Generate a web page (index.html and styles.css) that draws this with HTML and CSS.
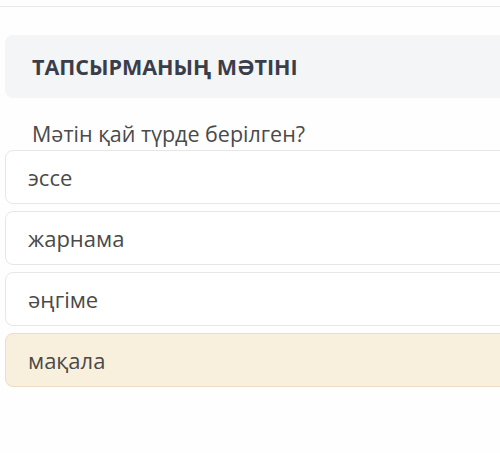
FILE: index.html
```html
<!DOCTYPE html>
<html lang="kk">
<head>
    <meta charset="UTF-8">
    <meta name="viewport" content="width=device-width, initial-scale=1.0">
    <title>Тапсырма</title>
    <link rel="stylesheet" href="styles.css">
</head>
<body>
    <div class="topbar"></div>
    <div class="task">
        <div class="task-header">
            <h2>ТАПСЫРМАНЫҢ МӘТІНІ</h2>
        </div>
        <p class="question">Мәтін қай түрде берілген?</p>
        <div class="options">
            <div class="option">эссе</div>
            <div class="option">жарнама</div>
            <div class="option">әңгіме</div>
            <div class="option selected">мақала</div>
        </div>
    </div>
</body>
</html>
```
FILE: styles.css
```css
body {
    font-family: 'Open Sans', 'Noto Sans', sans-serif;
    margin: 0;
    padding: 0;
    background: #fefefe;
    color: #484848;
    overflow: hidden;
}
.topbar {
    height: 6px;
    border-bottom: 1px solid #e9e9e9;
}
.task {
    padding-left: 5px;
    margin-right: -20px;
}
.task-header {
    margin-top: 28px;
    height: 63px;
    background: #f4f5f7;
    border-radius: 8px;
    display: flex;
    align-items: center;
    padding-left: 27px;
}
.task-header h2 {
    margin: 0;
    font-size: 21.5px;
    font-weight: 700;
    color: #3a3e49;
}
.question {
    margin: 22px 0 2px 27px;
    font-size: 21.5px;
    line-height: 28px;
    color: #4a4a4a;
}
.options {
    display: flex;
    flex-direction: column;
    gap: 7px;
}
.option {
    height: 52px;
    border: 1px solid #e7e7e7;
    border-radius: 8px;
    background: #fff;
    display: flex;
    align-items: center;
    padding-left: 22px;
    font-size: 22px;
    color: #4a4a4a;
}
.option.selected {
    background: #f8efdc;
    border-color: #e9dfc6;
}
```
